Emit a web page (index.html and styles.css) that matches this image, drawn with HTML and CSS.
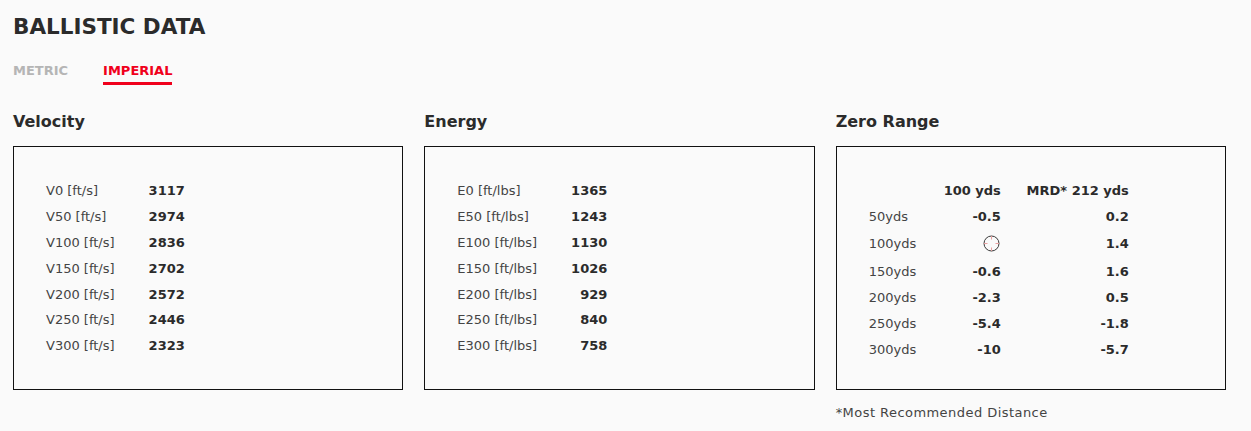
FILE: index.html
```html
<!DOCTYPE html>
<html lang="en">
<head>
<meta charset="utf-8">
<title>Ballistic Data</title>
<link rel="stylesheet" href="styles.css">
</head>
<body>
<main class="ballistic">
  <h1 class="title">BALLISTIC DATA</h1>
  <nav class="tabs">
    <span class="tab">METRIC</span>
    <span class="tab tab--active">IMPERIAL</span>
  </nav>
  <div class="columns">
    <section class="col">
      <h2 class="col-title">Velocity</h2>
      <div class="box">
        <table class="data">
          <tr><td class="lbl">V0 [ft/s]</td><td class="val">3117</td></tr>
          <tr><td class="lbl">V50 [ft/s]</td><td class="val">2974</td></tr>
          <tr><td class="lbl">V100 [ft/s]</td><td class="val">2836</td></tr>
          <tr><td class="lbl">V150 [ft/s]</td><td class="val">2702</td></tr>
          <tr><td class="lbl">V200 [ft/s]</td><td class="val">2572</td></tr>
          <tr><td class="lbl">V250 [ft/s]</td><td class="val">2446</td></tr>
          <tr><td class="lbl">V300 [ft/s]</td><td class="val">2323</td></tr>
        </table>
      </div>
    </section>
    <section class="col">
      <h2 class="col-title">Energy</h2>
      <div class="box">
        <table class="data">
          <tr><td class="lbl">E0 [ft/lbs]</td><td class="val">1365</td></tr>
          <tr><td class="lbl">E50 [ft/lbs]</td><td class="val">1243</td></tr>
          <tr><td class="lbl">E100 [ft/lbs]</td><td class="val">1130</td></tr>
          <tr><td class="lbl">E150 [ft/lbs]</td><td class="val">1026</td></tr>
          <tr><td class="lbl">E200 [ft/lbs]</td><td class="val">929</td></tr>
          <tr><td class="lbl">E250 [ft/lbs]</td><td class="val">840</td></tr>
          <tr><td class="lbl">E300 [ft/lbs]</td><td class="val">758</td></tr>
        </table>
      </div>
    </section>
    <section class="col">
      <h2 class="col-title">Zero Range</h2>
      <div class="box">
        <table class="data zero">
          <tr><th class="z0"></th><th class="val z1">100 yds</th><th class="val z2">MRD* 212 yds</th></tr>
          <tr><td class="lbl">50yds</td><td class="val">-0.5</td><td class="val">0.2</td></tr>
          <tr class="zero-row"><td class="lbl">100yds</td><td class="val"><svg class="target" width="17" height="17" viewBox="0 0 17 17" aria-hidden="true"><circle cx="8.5" cy="8.5" r="7.5" fill="none" stroke="#3a3a3a" stroke-width="1"/><path d="M8.5 1v3.5M8.5 12.5V16M1 8.5h3.5M12.5 8.5H16" stroke="#e8a0a0" stroke-width="1"/></svg></td><td class="val">1.4</td></tr>
          <tr><td class="lbl">150yds</td><td class="val">-0.6</td><td class="val">1.6</td></tr>
          <tr><td class="lbl">200yds</td><td class="val">-2.3</td><td class="val">0.5</td></tr>
          <tr><td class="lbl">250yds</td><td class="val">-5.4</td><td class="val">-1.8</td></tr>
          <tr><td class="lbl">300yds</td><td class="val">-10</td><td class="val">-5.7</td></tr>
        </table>
      </div>
      <p class="note">*Most Recommended Distance</p>
    </section>
  </div>
</main>
</body>
</html>
```
FILE: styles.css
```css
* { box-sizing: border-box; }
html, body { margin: 0; padding: 0; background: #fafafa; }
body {
  font-family: "DejaVu Sans", "Liberation Sans", sans-serif;
  color: #333;
}
.ballistic { padding: 14px 25px 0 13px; }
.title {
  margin: 0;
  font-size: 21.5px;
  font-weight: 700;
  line-height: 26px;
  color: #2b2b2b;
}
.tabs {
  display: flex;
  gap: 35px;
  margin-top: 23px;
}
.tab {
  font-size: 13px;
  font-weight: 700;
  color: #b5b5b5;
  line-height: 16px;
  padding-bottom: 3px;
  border-bottom: 3px solid transparent;
}
.tab--active { color: #f0001c; border-bottom-color: #f0001c; }
.columns {
  display: grid;
  grid-template-columns: repeat(3, 1fr);
  column-gap: 21px;
  margin-top: 26px;
}
.col-title {
  margin: 0 0 13px;
  font-size: 16px;
  font-weight: 700;
  line-height: 22px;
  color: #2b2b2b;
}
.box {
  border: 1px solid #111;
  height: 244px;
  padding: 30px 32px 0;
}
.data { border-collapse: collapse; font-size: 13px; margin-top: 1px; }
.data td, .data th { padding: 0; height: 25.8px; vertical-align: middle; white-space: nowrap; }
.lbl { color: #444; font-weight: 400; padding-right: 34px !important; text-align: left; }
.val { text-align: right; font-weight: 700; color: #2b2b2b; }
.zero { margin-top: 0; }
.zero td, .zero th { height: 26px; }
.zero .z0 { width: 75px; }
.zero .z1 { width: 57px; }
.zero .z2 { width: 128px; }
.zero .lbl { padding-right: 0 !important; }
.zero .zero-row td { height: 29px; }
.target { display: inline-block; vertical-align: middle; margin-right: 1px; }
.note {
  margin: 15px 0 0;
  font-size: 13px;
  color: #444;
  letter-spacing: 0.45px;
}
```
